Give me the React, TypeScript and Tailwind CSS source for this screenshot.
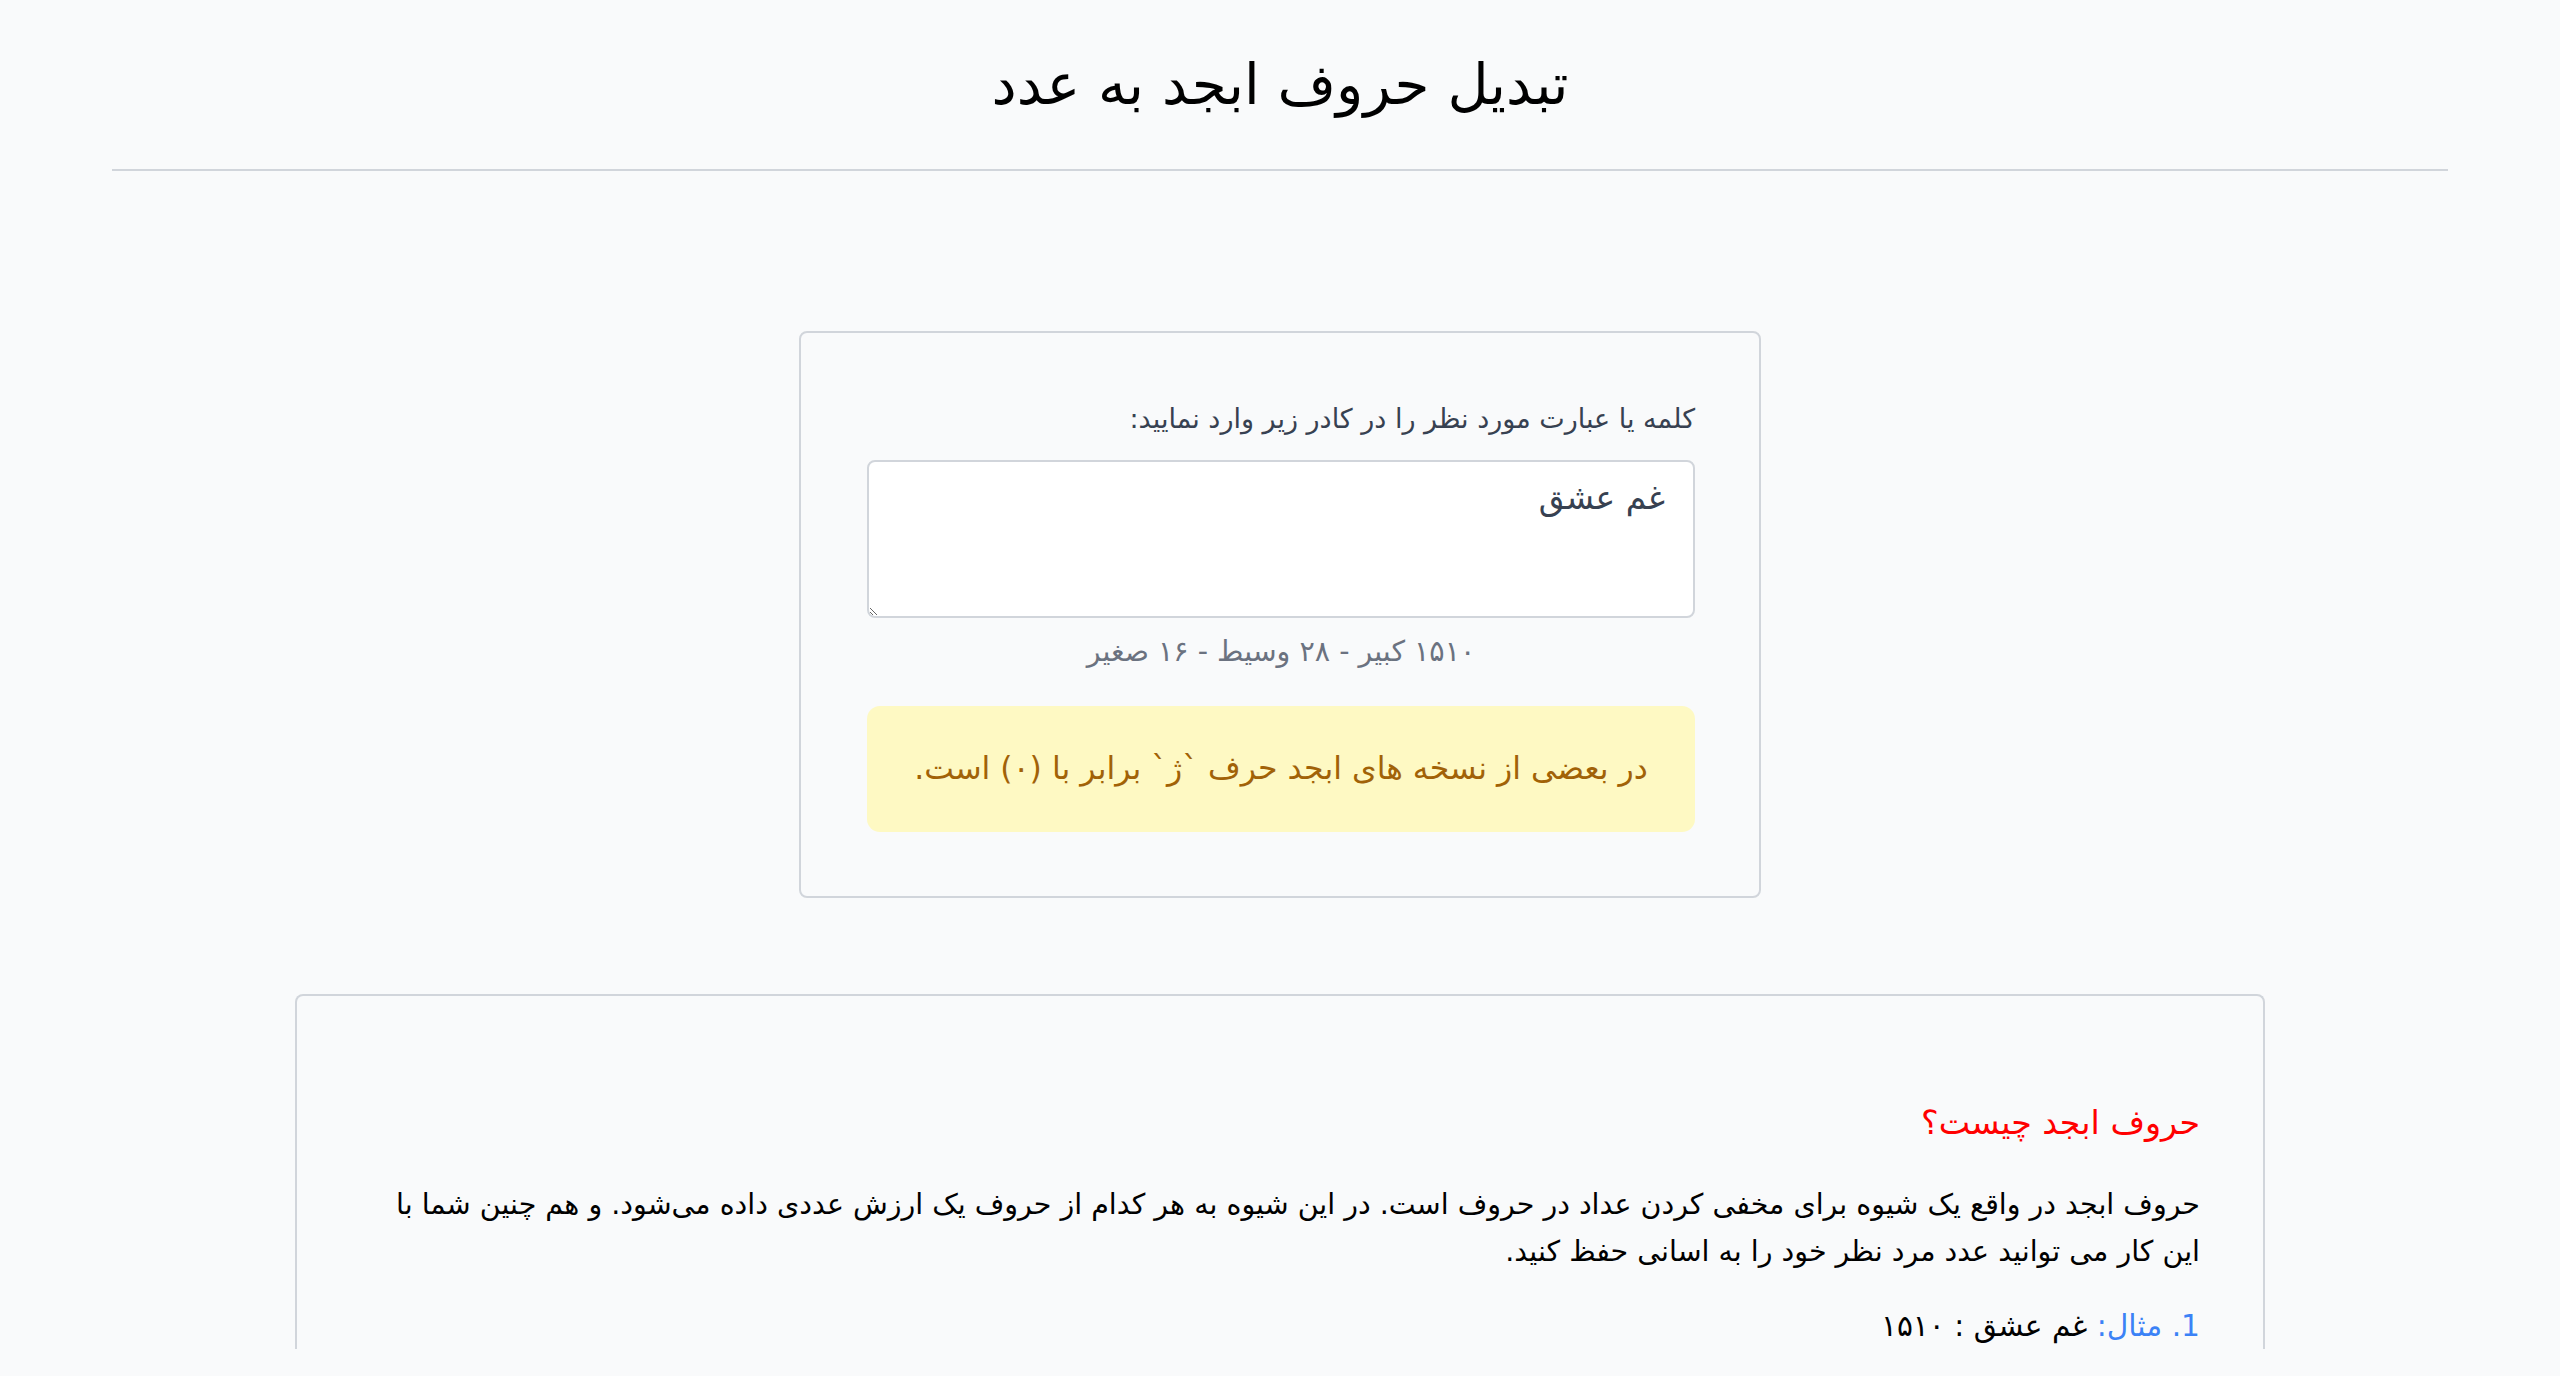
import React, { useState } from 'react';

export default function App() {
  const [text, setText] = useState('غم عشق');

  return (
    <div dir="rtl" className="min-h-screen bg-[#f9fafb] font-['DejaVu_Sans',sans-serif] text-black">
      <header className="mx-[112px] border-b-2 border-[#d1d5db] h-[171px] flex items-center justify-center">
        <h1 className="text-[56.5px] leading-none pt-[2px]">تبدیل حروف ابجد به عدد</h1>
      </header>

      <main className="flex flex-col items-center pt-[160px]">
        <section className="w-[962px] border-2 border-[#d1d5db] rounded-[8px] pr-[64px] pl-[66px] pt-[66px] pb-[64px]">
          <label className="block text-[27px] leading-[40px] text-[#374151] mb-[21px]">
            کلمه یا عبارت مورد نظر را در کادر زیر وارد نمایید:
          </label>
          <textarea
            value={text}
            onChange={(e) => setText(e.target.value)}
            className="block w-full h-[158px] bg-white border-2 border-[#d1d5db] rounded-[8px] px-[28px] py-[14px] text-[33px] leading-[44px] text-[#374151] outline-none resize-y"
          />
          <p className="text-center text-[28.5px] leading-[40px] text-[#6b7280] mt-[14px]">
            ۱۵۱۰ کبیر - ۲۸ وسیط - ۱۶ صغیر
          </p>
          <div className="mt-[34px] bg-[#fef9c3] rounded-[13px] h-[126px] flex items-center justify-center text-[31.5px] text-[#a16207]">
            در بعضی از نسخه های ابجد حرف `ژ` برابر با (۰) است.
          </div>
        </section>

        <section className="mt-[96px] w-[1970px] border-2 border-[#d1d5db] border-b-0 rounded-t-[8px] pr-[63px] pl-[66px] pt-[103px]">
          <h2 className="text-[33.3px] leading-[48px] text-[#ff0000]">حروف ابجد چیست؟</h2>
          <p className="mt-[34px] text-[28.5px] leading-[47px]">
            حروف ابجد در واقع یک شیوه برای مخفی کردن عداد در حروف است. در این شیوه به هر کدام از حروف یک ارزش عددی داده می‌شود. و هم چنین شما با این کار می توانید عدد مرد نظر خود را به اسانی حفظ کنید.
          </p>
          <ol className="mt-[27px] text-[29.7px] leading-[47px]">
            <li>
              <span className="text-[#3b82f6]">1. مثال:</span> غم عشق : ۱۵۱۰
            </li>
          </ol>
        </section>
      </main>
    </div>
  );
}
